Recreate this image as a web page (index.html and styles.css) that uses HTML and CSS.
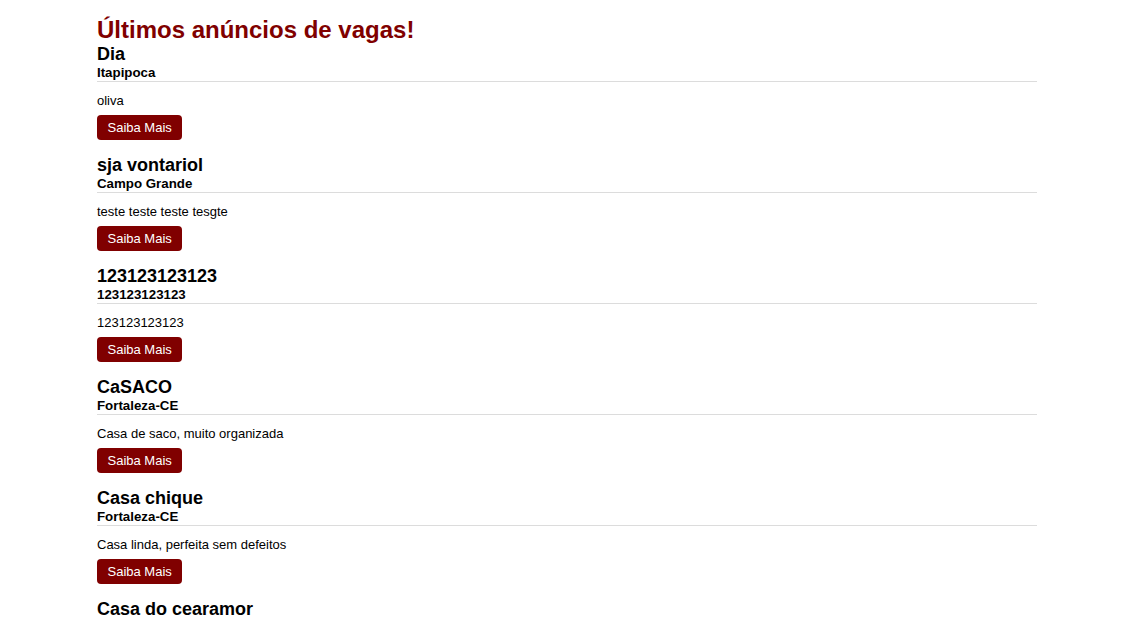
FILE: index.html
```html
<!DOCTYPE html>
<html lang="pt-BR">
<head>
<meta charset="utf-8">
<title>Últimos anúncios de vagas</title>
<link rel="stylesheet" href="styles.css">
</head>
<body>
<div class="container">
  <h1 class="page-title">Últimos anúncios de vagas!</h1>
  <div class="ad">
    <h4 class="ad-title">Dia</h4>
    <h5 class="ad-city">Itapipoca</h5>
    <hr class="ad-rule">
    <p class="ad-desc">oliva</p>
    <a class="btn" href="#">Saiba Mais</a>
  </div>
  <div class="ad">
    <h4 class="ad-title">sja vontariol</h4>
    <h5 class="ad-city">Campo Grande</h5>
    <hr class="ad-rule">
    <p class="ad-desc">teste teste teste tesgte</p>
    <a class="btn" href="#">Saiba Mais</a>
  </div>
  <div class="ad">
    <h4 class="ad-title">123123123123</h4>
    <h5 class="ad-city">123123123123</h5>
    <hr class="ad-rule">
    <p class="ad-desc">123123123123</p>
    <a class="btn" href="#">Saiba Mais</a>
  </div>
  <div class="ad">
    <h4 class="ad-title">CaSACO</h4>
    <h5 class="ad-city">Fortaleza-CE</h5>
    <hr class="ad-rule">
    <p class="ad-desc">Casa de saco, muito organizada</p>
    <a class="btn" href="#">Saiba Mais</a>
  </div>
  <div class="ad">
    <h4 class="ad-title">Casa chique</h4>
    <h5 class="ad-city">Fortaleza-CE</h5>
    <hr class="ad-rule">
    <p class="ad-desc">Casa linda, perfeita sem defeitos</p>
    <a class="btn" href="#">Saiba Mais</a>
  </div>
  <div class="ad">
    <h4 class="ad-title">Casa do cearamor</h4>
    <h5 class="ad-city">Fortaleza-CE</h5>
    <hr class="ad-rule">
    <p class="ad-desc">Casa do cearamor</p>
    <a class="btn" href="#">Saiba Mais</a>
  </div>
</div>
</body>
</html>
```
FILE: styles.css
```css
html, body {
  margin: 0;
  padding: 0;
  background: #fff;
}
body {
  font-family: "Liberation Sans", Arial, sans-serif;
  font-size: 13px;
  color: #000;
}
.container {
  width: 940px;
  margin-left: 97px;
  padding-bottom: 20px;
}
.page-title {
  margin: 16px 0 0;
  font-size: 24px;
  line-height: 28px;
  font-weight: bold;
  color: #800000;
}
.ad {
  display: flex;
  flex-direction: column;
  align-items: flex-start;
  padding-bottom: 15px;
}
.ad-title {
  margin: 0;
  font-size: 18px;
  line-height: 20px;
  font-weight: bold;
}
.ad-city {
  margin: 0;
  font-size: 13.3px;
  line-height: 17px;
  font-weight: bold;
}
.ad-rule {
  align-self: stretch;
  margin: 0;
  border: 0;
  border-top: 1px solid #dcdcdc;
  height: 0;
}
.ad-desc {
  margin: 10px 0 0;
  line-height: 18px;
}
.btn {
  display: inline-block;
  margin-top: 5px;
  height: 25px;
  line-height: 25px;
  padding: 0 10.5px;
  background: #800000;
  color: #fff;
  text-decoration: none;
  border-radius: 4px;
  font-size: 13px;
}
```
